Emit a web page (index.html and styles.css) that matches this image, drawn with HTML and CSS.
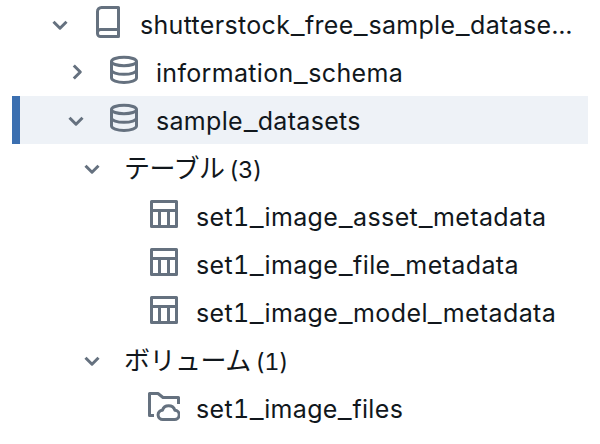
FILE: index.html
```html
<!DOCTYPE html>
<html lang="ja">
<head>
<meta charset="utf-8">
<title>Catalog</title>
<link rel="stylesheet" href="styles.css">
</head>
<body>
<svg class="defs" aria-hidden="true">
  <symbol id="down" viewBox="0 0 32 32"><path d="M9.5 13.7 16 20.2l6.500-6.500"/></symbol>
  <symbol id="right" viewBox="0 0 32 32"><path d="m13.800 9.500 6.500 6.500-6.500 6.500"/></symbol>
  <symbol id="book" viewBox="0 0 32 32"><path d="M5.500 27.500V5.500a4 4 0 0 1 4-4h17v29h-18a3 3 0 0 1-3-3v-1a3 3 0 0 1 3-3h18"/></symbol>
  <symbol id="db" viewBox="0 0 32 32"><ellipse cx="16" cy="7.500" rx="12.500" ry="4.200"/><path d="M3.500 7.500v16.600c0 2.400 5.600 4.400 12.500 4.400s12.500-2 12.500-4.400V7.500M3.500 16c0 2.400 5.600 4.300 12.500 4.300S28.500 18.400 28.500 16"/></symbol>
  <symbol id="table" viewBox="0 0 32 32"><path d="M3.500 3.500h25v25h-25zM3.500 12.500h25M11.500 12.500v16M20.500 12.500v16"/></symbol>
  <symbol id="volume" viewBox="0 0 32 32"><path d="M6 25.500H1.500V3.500H10l5 4h15.500V14"/><path d="M15 29.500a4.600 4.600 0 0 1-.6-9.200 6.600 6.600 0 0 1 12.500 0 4.600 4.600 0 0 1-.6 9.200z"/></symbol>
</svg>
<main class="tree">
  <div class="row l0"><svg class="chevron"><use href="#down"/></svg><svg class="icon"><use href="#book"/></svg><span class="name">shutterstock<span class="u">_</span>free<span class="u">_</span>sample<span class="u">_</span>datase...</span></div>
  <div class="row l1"><svg class="chevron"><use href="#right"/></svg><svg class="icon"><use href="#db"/></svg><span class="name">information<span class="u">_</span>schema</span></div>
  <div class="row l1 selected"><svg class="chevron"><use href="#down"/></svg><svg class="icon"><use href="#db"/></svg><span class="name">sample<span class="u">_</span>datasets</span></div>
  <div class="row l2"><svg class="chevron"><use href="#down"/></svg><span class="group">テーブル <span class="count">(3)</span></span></div>
  <div class="row l3"><svg class="icon"><use href="#table"/></svg><span class="name table">set1<span class="u">_</span>image<span class="u">_</span>asset<span class="u">_</span>metadata</span></div>
  <div class="row l3"><svg class="icon"><use href="#table"/></svg><span class="name table">set1<span class="u">_</span>image<span class="u">_</span>file<span class="u">_</span>metadata</span></div>
  <div class="row l3"><svg class="icon"><use href="#table"/></svg><span class="name table">set1<span class="u">_</span>image<span class="u">_</span>model<span class="u">_</span>metadata</span></div>
  <div class="row l2"><svg class="chevron"><use href="#down"/></svg><span class="group">ボリューム <span class="count">(1)</span></span></div>
  <div class="row l3"><svg class="icon"><use href="#volume"/></svg><span class="name">set1<span class="u">_</span>image<span class="u">_</span>files</span></div>
</main>
</body>
</html>
```
FILE: styles.css
```css
body {
  margin: 0;
  background: #fff;
  color: #11171c;
  font-family: Inter, "Noto Sans CJK JP", sans-serif;
  font-size: 25px;
  font-variant-numeric: tabular-nums;
  overflow: hidden;
}
.defs {
  display: none;
}
.tree {
  margin: 0 12px;
}
.row {
  display: flex;
  gap: 16px;
  box-sizing: border-box;
  height: 48px;
  line-height: 48px;
  white-space: nowrap;
}
.l0 { padding-left: 32px; }
.l1 { padding-left: 48px; }
.l2 { padding-left: 64px; }
.l3 { padding-left: 136px; }
.selected {
  padding-left: 40px;
  border-left: 8px solid #3b6fb0;
  background: #eef2f7;
}
.chevron,
.icon {
  flex: none;
  width: 32px;
  height: 32px;
  margin-top: 6px;
  fill: none;
  stroke: #65717f;
  stroke-width: 3;
  stroke-linejoin: round;
}
.chevron {
  margin-top: 8px;
}
.name {
  letter-spacing: 0.32px;
  padding-top: 1px;
}
.table {
  letter-spacing: 0.38px;
}
.u {
  display: inline-block;
  margin: 0 1.5px;
  transform: scaleX(1.22);
  line-height: 1;
}
.group {
  padding-top: 1px;
  font-size: 26px;
  letter-spacing: -0.5px;
  word-spacing: -1.8px;
}
.count {
  font-size: 23.5px;
  letter-spacing: -0.3px;
}
```
